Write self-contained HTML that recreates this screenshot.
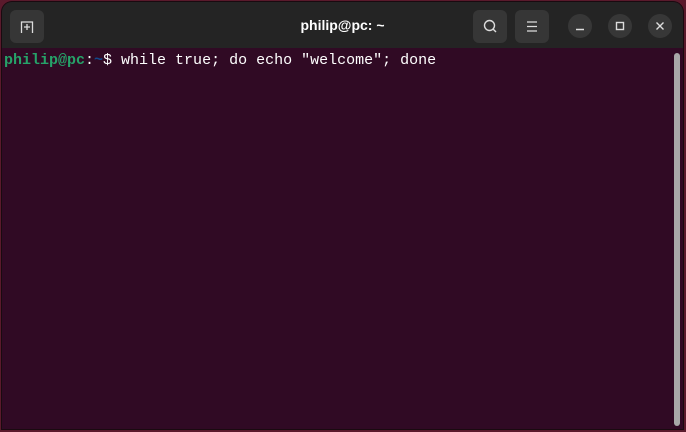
<!DOCTYPE html>
<html><head><style>
html,body{margin:0;padding:0;width:686px;height:432px;overflow:hidden;background:#5a1a2c;}
.win{position:absolute;left:2px;top:2px;width:681px;height:427px;background:#300a24;border-radius:10px 10px 0 0;overflow:hidden;box-shadow:0 0 0 1px #1a0a10;}
.tb{position:absolute;left:0;top:0;right:0;height:46px;background:#242424;}
.btn{position:absolute;top:8px;width:34px;height:33px;border-radius:6px;background:#363636;}
.circ{position:absolute;top:12px;width:24px;height:24px;border-radius:50%;background:#373737;}
.title{position:absolute;top:15px;left:0;right:0;text-align:center;font:bold 14px "Liberation Sans",sans-serif;color:#fff;}
.term{position:absolute;left:2px;top:50px;font:15px/17px "Liberation Mono",monospace;color:#fff;white-space:pre;}
.g{color:#26a269;font-weight:bold}.b{color:#12488b;font-weight:bold}
.sb{position:absolute;left:672px;top:51px;width:6px;height:373px;border-radius:3px;background:#a8a8a8;}
</style></head><body>
<div class="win">
<div class="tb">
<div class="btn" style="left:8px"><svg width="34" height="33"><path d="M11.5 23V12h11v11M17 14v6M14 17h6" stroke="#ddd" stroke-width="1.3" fill="none"/></svg></div>
<div class="title">philip@pc: ~</div>
<div class="btn" style="left:471px"><svg width="34" height="33"><circle cx="16.5" cy="15.5" r="5" stroke="#ddd" stroke-width="1.4" fill="none"/><path d="M20 19l3 3" stroke="#ddd" stroke-width="1.4"/></svg></div>
<div class="btn" style="left:513px"><svg width="34" height="33"><path d="M12 12h10M12 16.5h10M12 21h10" stroke="#ddd" stroke-width="1.3"/></svg></div>
<div class="circ" style="left:566px"><svg width="24" height="24"><path d="M8 15.5h8" stroke="#ddd" stroke-width="1.4"/></svg></div>
<div class="circ" style="left:606px"><svg width="24" height="24"><rect x="8.5" y="8.5" width="7" height="7" stroke="#ddd" stroke-width="1.4" fill="none"/></svg></div>
<div class="circ" style="left:646px"><svg width="24" height="24"><path d="M8.5 8.5l7 7M15.5 8.5l-7 7" stroke="#ddd" stroke-width="1.4"/></svg></div>
</div>
<div class="term"><span class="g">philip@pc</span>:<span class="b">~</span>$ while true; do echo "welcome"; done</div>
<div class="sb"></div>
</div>
</body></html>
